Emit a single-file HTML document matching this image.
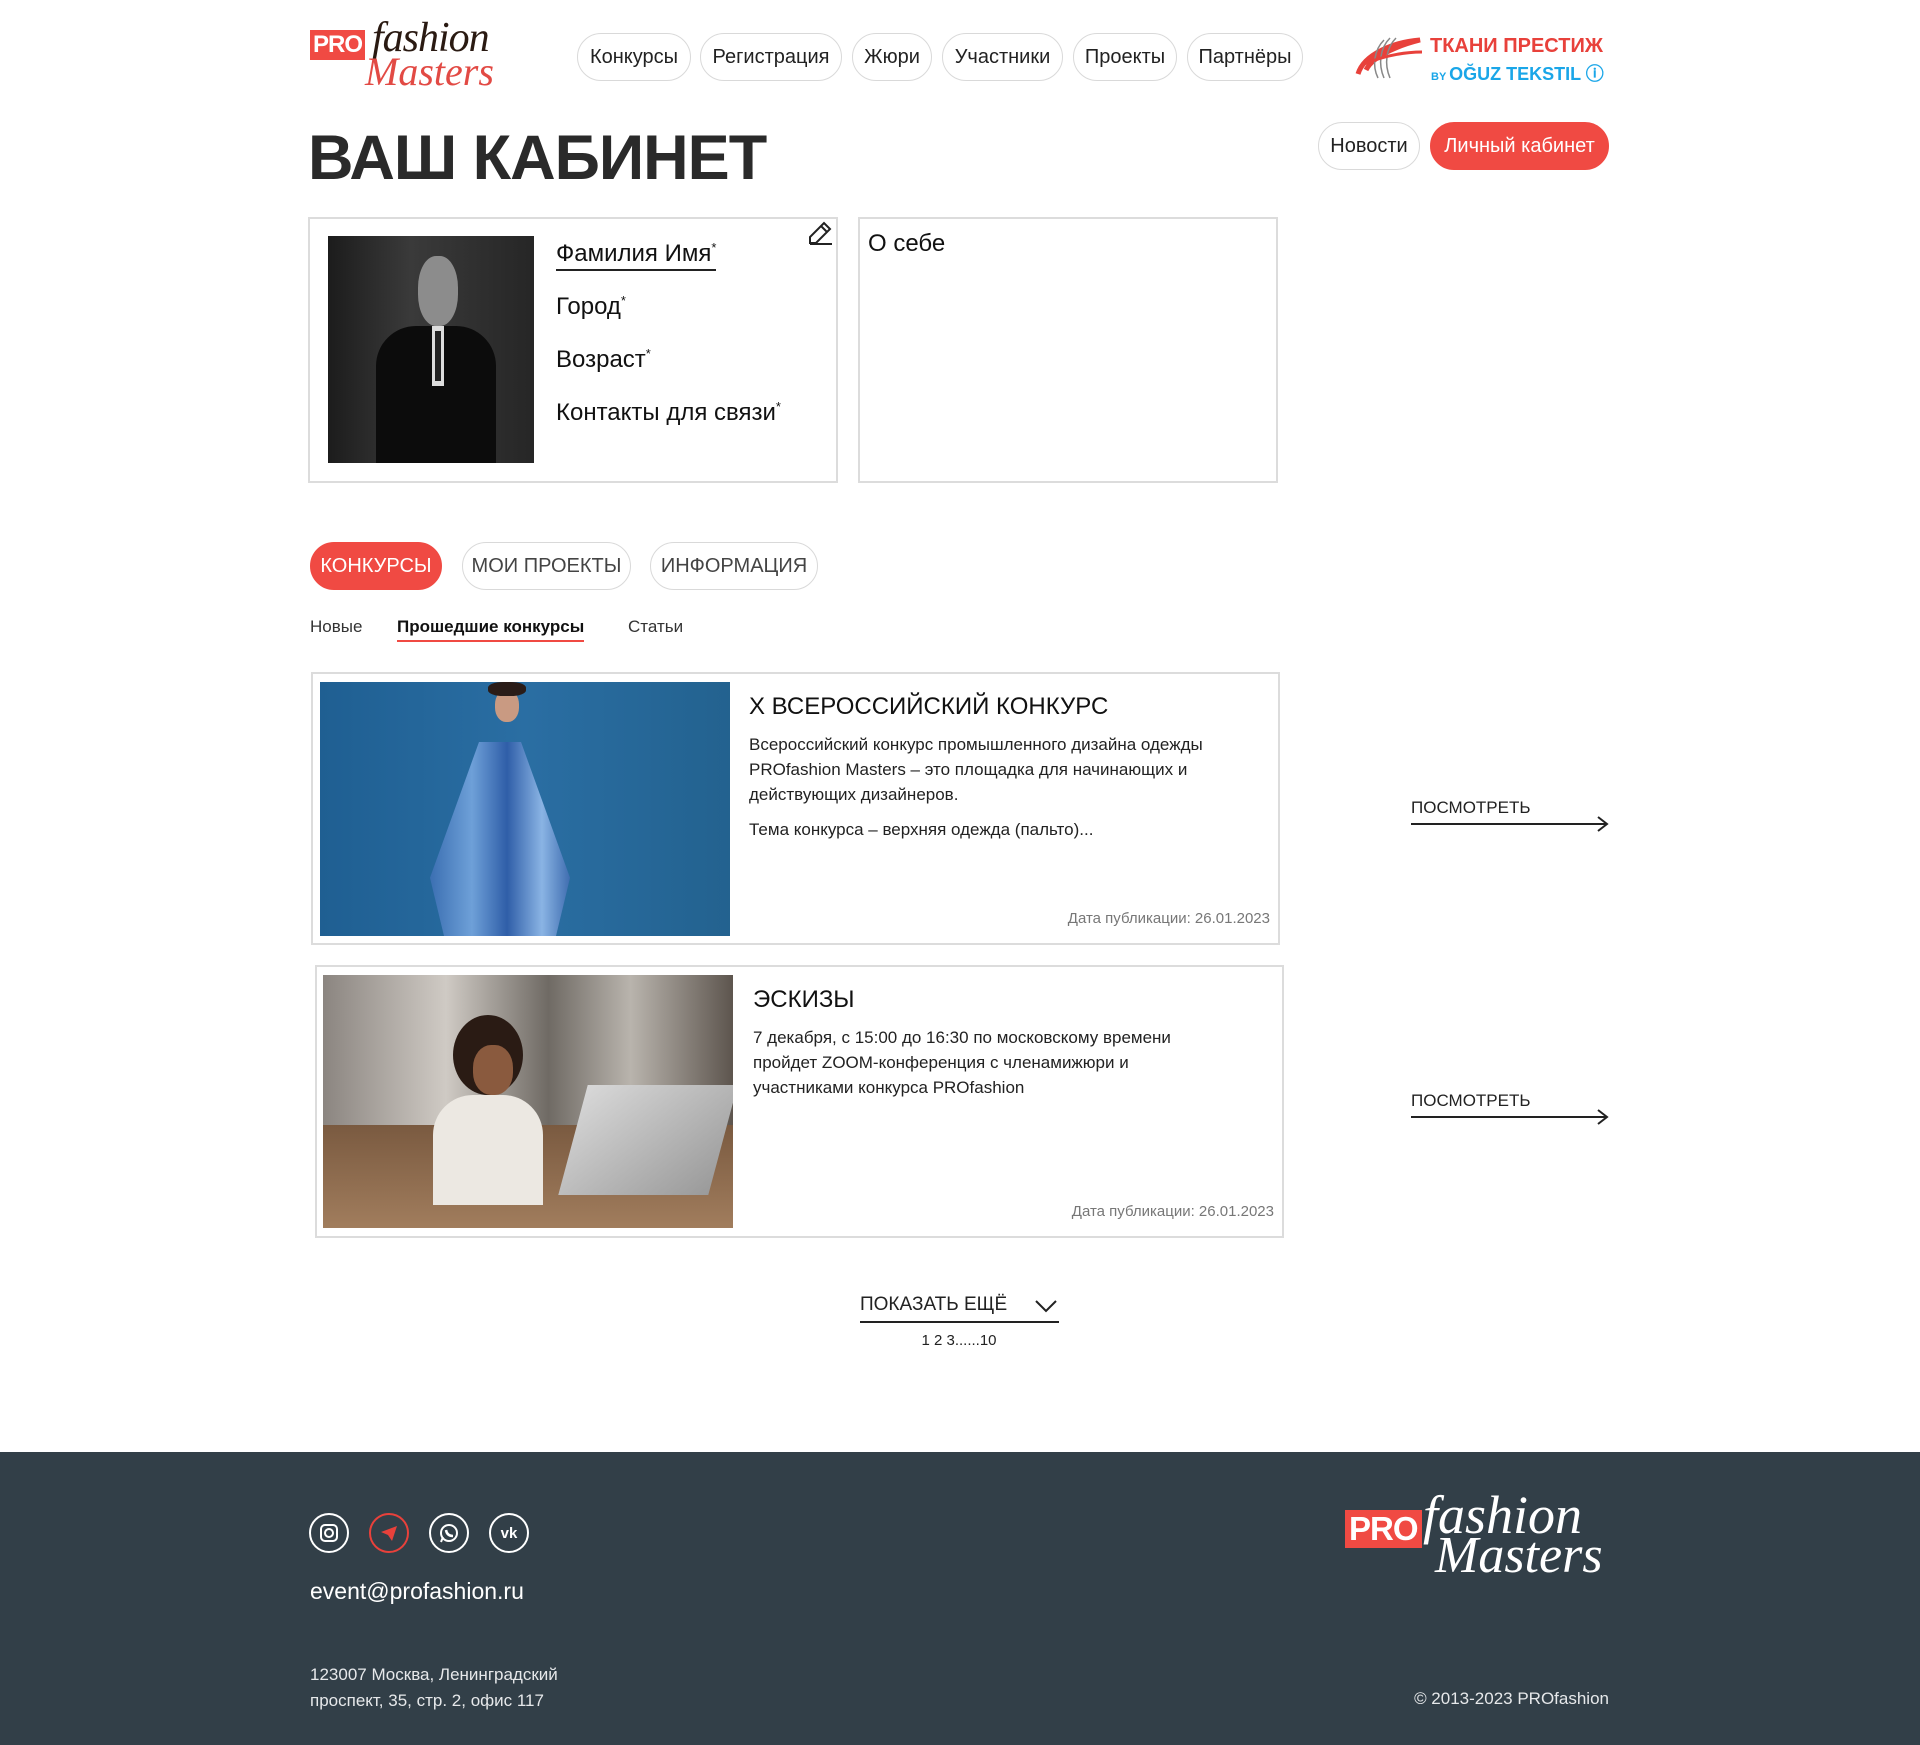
<!DOCTYPE html>
<html><head><meta charset="utf-8"><style>
*{margin:0;padding:0;box-sizing:border-box}
body{width:1920px;height:1745px;position:relative;background:#fff;font-family:"Liberation Sans",sans-serif;color:#1e1e1e;overflow:hidden}
.a{position:absolute}
.pill{position:absolute;height:48px;border:1px solid #d9d9d9;border-radius:24px;display:flex;align-items:center;justify-content:center;font-size:20px;color:#222;background:#fff}
.red{background:#f04a43;color:#fff;border-color:#f04a43}
.card{position:absolute;border:2px solid #dcdcdc;background:#fff}
.fld{position:absolute;left:556px;font-size:24px;color:#111}
.fld sup{font-size:13px}
.desc{font-size:17px;line-height:25px;color:#222}
.date{position:absolute;font-size:15px;color:#777}
.more{position:absolute;left:1411px;width:197px;font-size:17px;color:#222}
.more .l{position:absolute;left:0;width:196px;height:2px;background:#222}
.ic{position:absolute;top:1513px;width:40px;height:40px;border:2px solid #fff;border-radius:50%;display:flex;align-items:center;justify-content:center}
</style></head><body>

<div class="a" style="left:310px;top:18px;width:220px;height:70px">
  <div class="a" style="left:0;top:12px;background:#f04a43;color:#fff;font-weight:bold;font-size:24px;padding:1px 3px;letter-spacing:-1px">PRO</div>
  <div class="a" style="left:62px;top:-4px;font-family:'Liberation Serif',serif;font-style:italic;font-size:42px;color:#2a1a12;letter-spacing:-1px">fashion</div>
  <div class="a" style="left:55px;top:30px;font-family:'Liberation Serif',serif;font-style:italic;font-size:40px;color:#e24a44">Masters</div>
</div>

<div class="pill" style="left:577px;top:33px;width:114px">Конкурсы</div>
<div class="pill" style="left:700px;top:33px;width:142px">Регистрация</div>
<div class="pill" style="left:852px;top:33px;width:80px">Жюри</div>
<div class="pill" style="left:942px;top:33px;width:121px">Участники</div>
<div class="pill" style="left:1073px;top:33px;width:104px">Проекты</div>
<div class="pill" style="left:1187px;top:33px;width:116px">Партнёры</div>

<svg class="a" style="left:1354px;top:34px" width="72" height="48" viewBox="0 0 72 48">
 <path d="M4 40 C10 20 40 8 66 6 C50 10 20 20 12 36" fill="none" stroke="#e8413b" stroke-width="5"/>
 <path d="M30 6 C20 16 18 32 24 44 M36 4 C26 14 24 30 30 44 M42 4 C32 14 30 30 36 44" fill="none" stroke="#888" stroke-width="1.5"/>
 <path d="M10 30 C30 22 50 18 68 18" fill="none" stroke="#e8413b" stroke-width="3"/>
</svg>
<div class="a" style="left:1430px;top:35px;font-size:20px;font-weight:bold;color:#e8413b;letter-spacing:0">ТКАНИ ПРЕСТИЖ</div>
<div class="a" style="left:1431px;top:60px;font-size:18px;font-weight:bold;color:#1aa6e8"><span style="font-size:11px">BY </span>OĞUZ TEKSTIL ⓘ</div>

<div class="a" style="left:308px;top:122px;font-size:63px;font-weight:bold;color:#2a2a2a;letter-spacing:-1px">ВАШ КАБИНЕТ</div>
<div class="pill" style="left:1318px;top:122px;width:102px">Новости</div>
<div class="pill red" style="left:1430px;top:122px;width:179px">Личный кабинет</div>

<div class="card" style="left:308px;top:217px;width:530px;height:266px"></div>
<div class="a" style="left:328px;top:236px;width:206px;height:227px;background:linear-gradient(90deg,#1c1c1c,#3a3a3a 40%,#262626);overflow:hidden">
  <div class="a" style="left:48px;top:90px;width:120px;height:150px;background:#0c0c0c;border-radius:40px 40px 0 0"></div>
  <div class="a" style="left:104px;top:90px;width:12px;height:60px;background:#ddd"></div>
  <div class="a" style="left:107px;top:95px;width:6px;height:50px;background:#222"></div>
  <div class="a" style="left:90px;top:20px;width:40px;height:70px;background:#8c8c8c;border-radius:45%"></div>
</div>
<div class="fld" style="top:240px;border-bottom:2px solid #222;padding-bottom:1px">Фамилия Имя<sup>*</sup></div>
<div class="fld" style="top:293px">Город<sup>*</sup></div>
<div class="fld" style="top:346px">Возраст<sup>*</sup></div>
<div class="fld" style="top:399px">Контакты для связи<sup>*</sup></div>
<svg class="a" style="left:807px;top:220px" width="28" height="26" viewBox="0 0 28 26"><path d="M3 23 L3 17 L17 3 L23 9 L9 23 Z M14 6 L20 12 M3 24 H25" fill="none" stroke="#222" stroke-width="2"/></svg>

<div class="card" style="left:858px;top:217px;width:420px;height:266px"></div>
<div class="a" style="left:868px;top:230px;font-size:24px;color:#111">О себе</div>

<div class="pill red" style="left:310px;top:542px;width:132px;font-size:20px">КОНКУРСЫ</div>
<div class="pill" style="left:462px;top:542px;width:169px;font-size:20px;color:#444">МОИ ПРОЕКТЫ</div>
<div class="pill" style="left:650px;top:542px;width:168px;font-size:20px;color:#444">ИНФОРМАЦИЯ</div>
<div class="a" style="left:310px;top:617px;font-size:17px;color:#333">Новые</div>
<div class="a" style="left:397px;top:617px;font-size:17px;font-weight:bold;color:#111;border-bottom:2px solid #f04a43;padding-bottom:3px">Прошедшие конкурсы</div>
<div class="a" style="left:628px;top:617px;font-size:17px;color:#333">Статьи</div>

<div class="card" style="left:311px;top:672px;width:969px;height:273px"></div>
<div class="a" style="left:320px;top:682px;width:410px;height:254px;background:linear-gradient(90deg,#1f5f92,#2a6ea3 50%,#23628f);overflow:hidden">
  <div class="a" style="left:110px;top:60px;width:140px;height:194px;background:linear-gradient(90deg,#3b6fb2,#6ea0d8 30%,#2f5ea8 55%,#8ab4e4 80%,#3f6db0);clip-path:polygon(35% 0,65% 0,100% 70%,90% 100%,10% 100%,0 70%)"></div>
  <div class="a" style="left:175px;top:8px;width:24px;height:32px;background:#c99a82;border-radius:45%"></div>
  <div class="a" style="left:168px;top:0;width:38px;height:14px;background:#2a1c18;border-radius:40%"></div>
</div>
<div class="a" style="left:749px;top:693px;font-size:24px;color:#111">X ВСЕРОССИЙСКИЙ КОНКУРС</div>
<div class="a desc" style="left:749px;top:732px;width:520px">Всероссийский конкурс промышленного дизайна одежды PROfashion Masters – это площадка для начинающих и действующих дизайнеров.</div>
<div class="a desc" style="left:749px;top:817px">Тема конкурса – верхняя одежда (пальто)...</div>
<div class="date" style="right:650px;top:910px">Дата публикации: 26.01.2023</div>
<div class="more" style="top:798px">ПОСМОТРЕТЬ<div class="l" style="top:25px"></div><svg class="a" style="left:186px;top:18px" width="12" height="16"><path d="M1 1 L10 8 L1 15" fill="none" stroke="#222" stroke-width="2"/></svg></div>

<div class="card" style="left:315px;top:965px;width:969px;height:273px"></div>
<div class="a" style="left:323px;top:975px;width:410px;height:253px;background:linear-gradient(90deg,#8b8580,#cfcac4 30%,#6f6a64 55%,#b9b4ad 75%,#5d554e);overflow:hidden">
  <div class="a" style="left:0;top:150px;width:410px;height:103px;background:linear-gradient(180deg,#7a5a40,#a17d5d)"></div>
  <div class="a" style="left:130px;top:40px;width:70px;height:80px;background:#2a1b14;border-radius:50%"></div>
  <div class="a" style="left:150px;top:70px;width:40px;height:50px;background:#8a5a3e;border-radius:45%"></div>
  <div class="a" style="left:110px;top:120px;width:110px;height:110px;background:#ece8e2;border-radius:40px 40px 0 0"></div>
  <div class="a" style="left:250px;top:110px;width:150px;height:110px;background:linear-gradient(135deg,#d8d8d8,#9a9a9a);transform:skewX(-15deg)"></div>
</div>
<div class="a" style="left:753px;top:986px;font-size:24px;color:#111">ЭСКИЗЫ</div>
<div class="a desc" style="left:753px;top:1025px;width:480px">7 декабря, с 15:00 до 16:30 по московскому времени пройдет ZOOM-конференция с членамижюри и участниками конкурса PROfashion</div>
<div class="date" style="right:646px;top:1203px">Дата публикации: 26.01.2023</div>
<div class="more" style="top:1091px">ПОСМОТРЕТЬ<div class="l" style="top:25px"></div><svg class="a" style="left:186px;top:18px" width="12" height="16"><path d="M1 1 L10 8 L1 15" fill="none" stroke="#222" stroke-width="2"/></svg></div>

<div class="a" style="left:860px;top:1294px;width:199px;font-size:19px;color:#222;border-bottom:2px solid #222;padding-bottom:5px">ПОКАЗАТЬ ЕЩЁ <svg style="position:absolute;left:174px;top:5px" width="24" height="14"><path d="M2 2 L12 12 L22 2" fill="none" stroke="#222" stroke-width="2"/></svg></div>
<div class="a" style="left:0;width:1918px;top:1332px;text-align:center;font-size:15px;color:#222">1 2 3......10</div>

<div class="a" style="left:0;top:1452px;width:1920px;height:293px;background:#323f48"></div>
<div class="ic" style="left:309px"><svg width="22" height="22"><rect x="3" y="3" width="16" height="16" rx="4" fill="none" stroke="#fff" stroke-width="2"/><circle cx="11" cy="11" r="4" fill="none" stroke="#fff" stroke-width="2"/></svg></div>
<div class="ic" style="left:369px;border-color:#e8413b"><svg width="22" height="22"><path d="M3 10 L19 4 L14 19 L10 13 Z" fill="#e8413b"/></svg></div>
<div class="ic" style="left:429px"><svg width="22" height="22"><circle cx="11" cy="11" r="8" fill="none" stroke="#fff" stroke-width="2"/><path d="M3 20 L5 15" stroke="#fff" stroke-width="2"/><path d="M8 8 Q9 14 15 14" fill="none" stroke="#fff" stroke-width="2.5"/></svg></div>
<div class="ic" style="left:489px;color:#fff;font-weight:bold;font-size:15px">vk</div>
<div class="a" style="left:310px;top:1578px;font-size:23px;color:#fff">event@profashion.ru</div>
<div class="a" style="left:310px;top:1662px;font-size:17px;line-height:26px;color:#e6e8ea">123007 Москва, Ленинградский<br>проспект, 35, стр. 2, офис 117</div>
<div class="a" style="right:311px;top:1689px;font-size:17px;color:#e6e8ea">© 2013-2023 PROfashion</div>
<div class="a" style="left:1343px;top:1496px;width:270px;height:90px">
  <div class="a" style="left:2px;top:14px;background:#f04a43;color:#fff;font-weight:bold;font-size:33px;padding:0 4px;letter-spacing:-1px">PRO</div>
  <div class="a" style="left:80px;top:-12px;font-family:'Liberation Serif',serif;font-style:italic;font-size:54px;color:#fff">fashion</div>
  <div class="a" style="left:92px;top:30px;font-family:'Liberation Serif',serif;font-style:italic;font-size:52px;color:#fff">Masters</div>
</div>
</body></html>
